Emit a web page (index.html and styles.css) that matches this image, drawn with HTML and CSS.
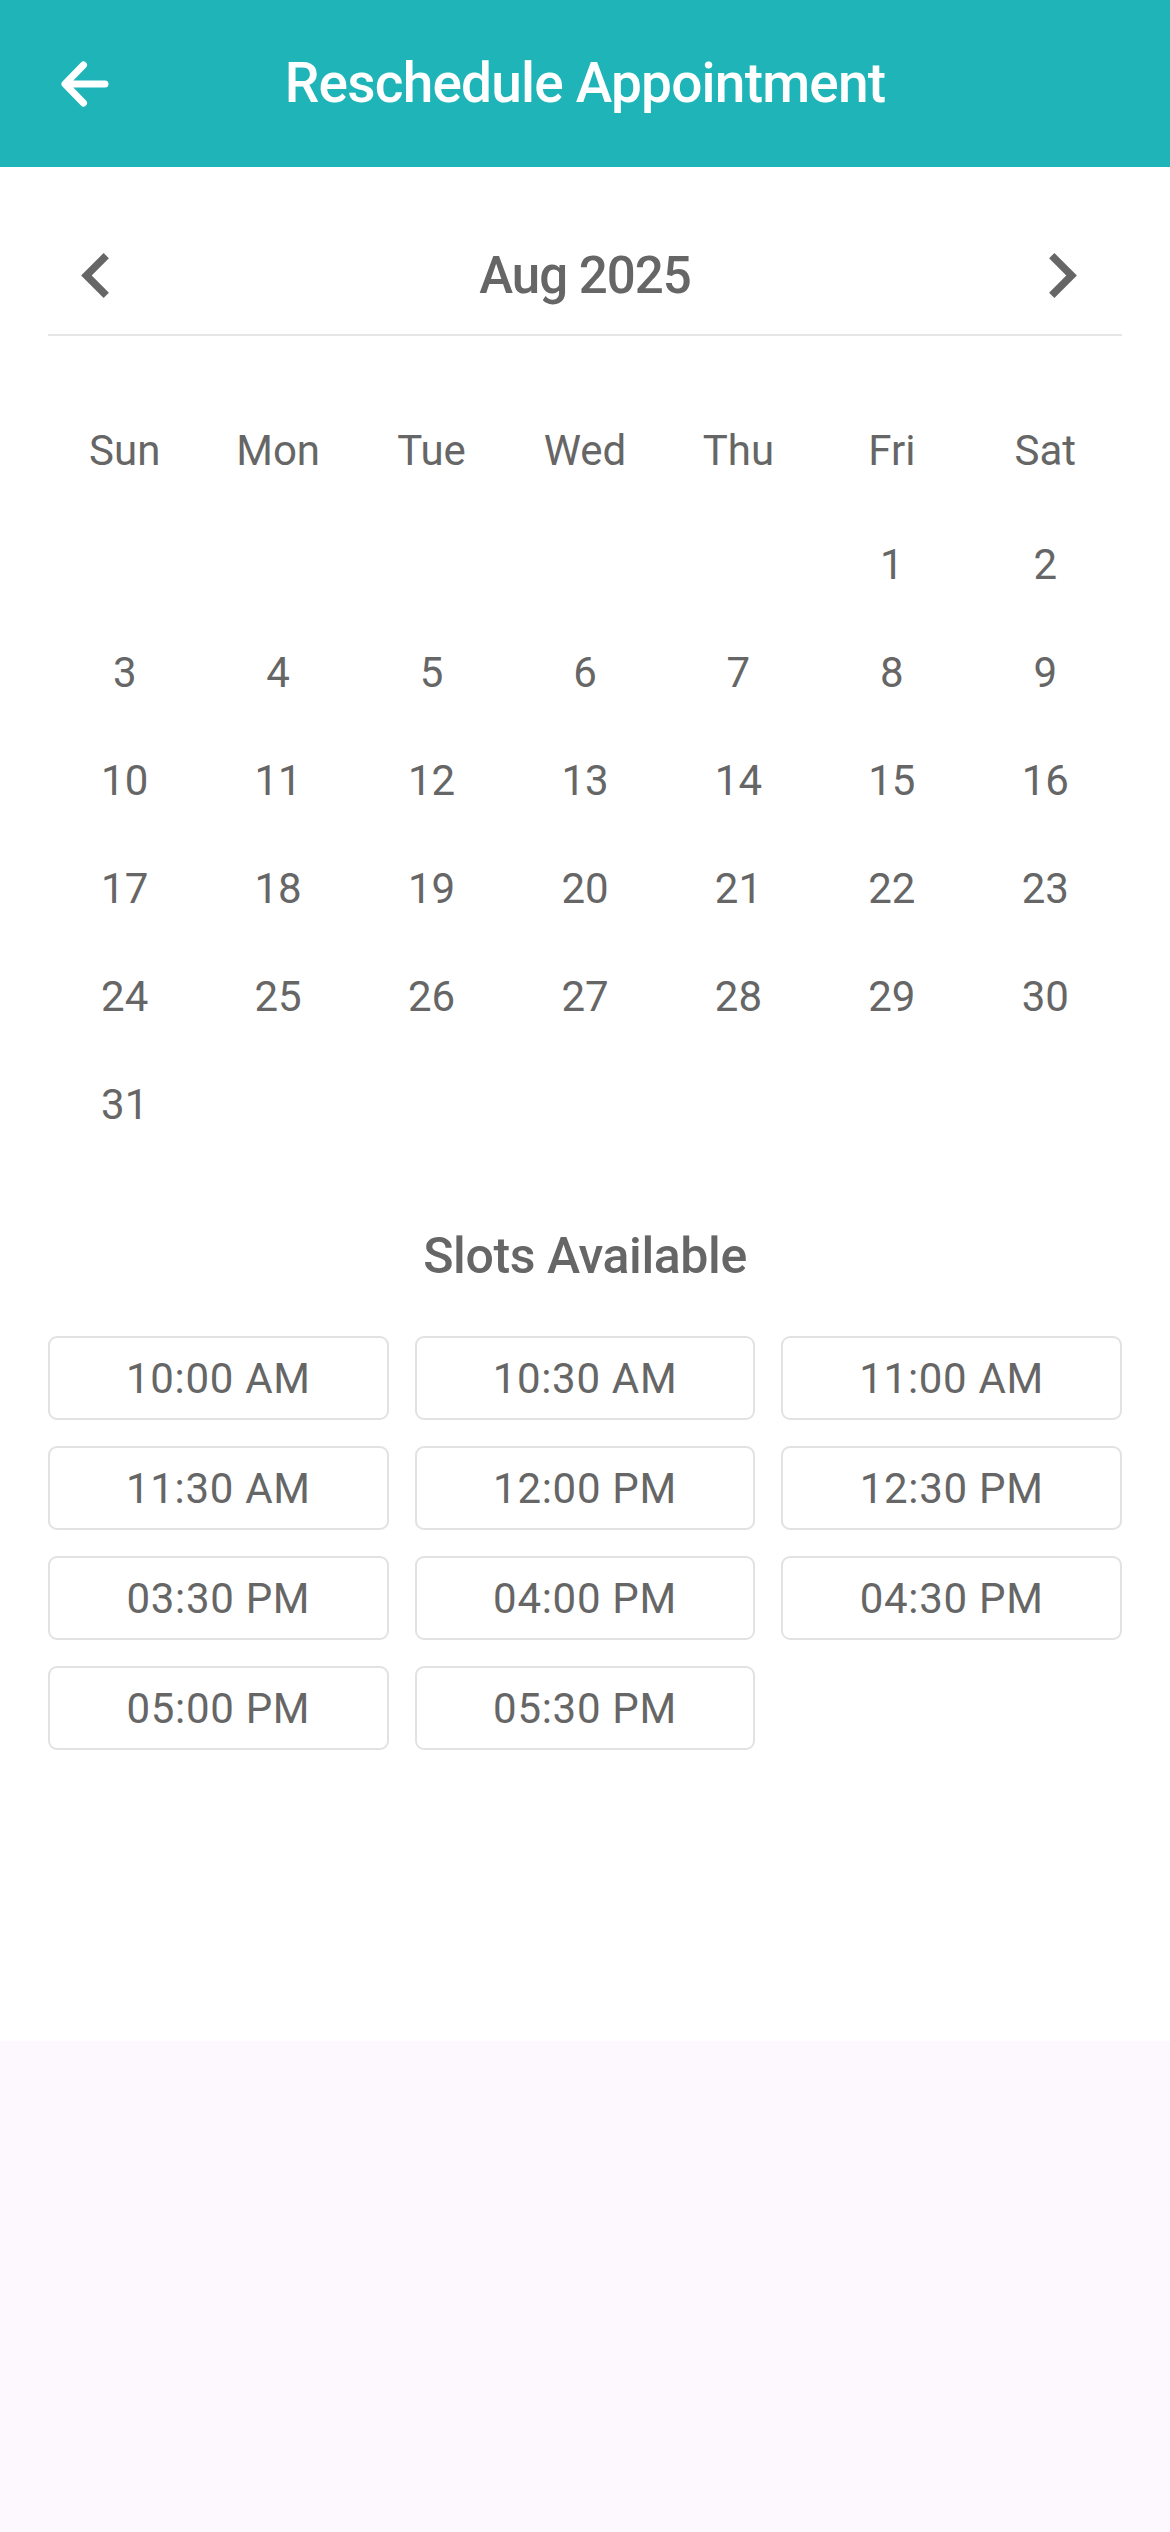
FILE: index.html
```html
<!DOCTYPE html>
<html lang="en">
<head>
<meta charset="utf-8">
<title>Reschedule Appointment</title>
<link rel="stylesheet" href="styles.css">
</head>
<body>
<div class="screen">
  <header class="appbar">
    <div class="appbar-lead">
      <svg class="back-icon" width="48" height="48" viewBox="0 0 48 48" aria-hidden="true">
        <path d="M44 24 H5 M22.5 5 L4 24 L22.5 43" fill="none" stroke="#fff" stroke-width="7" stroke-linecap="round" stroke-linejoin="round"/>
      </svg>
    </div>
    <h1 class="appbar-title">Reschedule Appointment</h1>
    <div class="appbar-trail"></div>
  </header>

  <main class="content">
    <div class="month-nav">
      <svg class="chev chev-left" width="28" height="45" viewBox="8 6 7.41 12" aria-hidden="true">
        <path d="M15.41 7.41L14 6l-6 6 6 6 1.41-1.41L10.83 12z" fill="#666"/>
      </svg>
      <div class="month-label">Aug 2025</div>
      <svg class="chev chev-right" width="28" height="45" viewBox="8.59 6 7.41 12" aria-hidden="true">
        <path d="M10 6L8.59 7.41 13.17 12l-4.58 4.59L10 18l6-6z" fill="#666"/>
      </svg>
    </div>

    <div class="weekdays">
      <span>Sun</span><span>Mon</span><span>Tue</span><span>Wed</span><span>Thu</span><span>Fri</span><span>Sat</span>
    </div>

    <div class="days">
      <span></span><span></span><span></span><span></span><span></span><span>1</span><span>2</span>
      <span>3</span><span>4</span><span>5</span><span>6</span><span>7</span><span>8</span><span>9</span>
      <span>10</span><span>11</span><span>12</span><span>13</span><span>14</span><span>15</span><span>16</span>
      <span>17</span><span>18</span><span>19</span><span>20</span><span>21</span><span>22</span><span>23</span>
      <span>24</span><span>25</span><span>26</span><span>27</span><span>28</span><span>29</span><span>30</span>
      <span>31</span>
    </div>

    <h2 class="slots-title">Slots Available</h2>

    <div class="slots">
      <button class="slot">10:00 AM</button>
      <button class="slot">10:30 AM</button>
      <button class="slot">11:00 AM</button>
      <button class="slot">11:30 AM</button>
      <button class="slot">12:00 PM</button>
      <button class="slot">12:30 PM</button>
      <button class="slot">03:30 PM</button>
      <button class="slot">04:00 PM</button>
      <button class="slot">04:30 PM</button>
      <button class="slot">05:00 PM</button>
      <button class="slot">05:30 PM</button>
    </div>
  </main>
</div>
</body>
</html>
```

FILE: styles.css
```css
* {
  box-sizing: border-box;
}

html, body {
  margin: 0;
  padding: 0;
}

body {
  background: #fdf7fe;
  font-family: Roboto, "Noto Sans", "Liberation Sans", sans-serif;
  color: #666666;
  min-height: 2532px;
}

.screen {
  background: #ffffff;
  height: 2041px;
}

.appbar {
  height: 167px;
  background: #1fb5b8;
  display: grid;
  grid-template-columns: 1fr auto 1fr;
  align-items: center;
}

.appbar-lead {
  display: flex;
  align-items: center;
  padding-left: 61px;
}

.back-icon {
  display: block;
}

.appbar-title {
  margin: 0;
  color: #ffffff;
  font-size: 55px;
  font-weight: 500;
  line-height: 1;
  letter-spacing: -0.8px;
}

.content {
  padding: 0 48px;
}

.month-nav {
  margin-top: 64px;
  height: 105px;
  padding-bottom: 15px;
  border-bottom: 2px solid #e6e6e6;
  display: grid;
  grid-template-columns: 1fr auto 1fr;
  align-items: center;
}

.chev {
  display: block;
}

.chev-left {
  margin-left: 33px;
  justify-self: start;
}

.chev-right {
  margin-right: 45px;
  justify-self: end;
}

.month-label {
  font-size: 51px;
  font-weight: 500;
  letter-spacing: -1px;
  color: #666666;
}

.weekdays,
.days {
  display: grid;
  grid-template-columns: repeat(7, 1fr);
}

.weekdays {
  margin-top: 60px;
  margin-bottom: 6px;
}

.weekdays span,
.days span {
  height: 108px;
  display: flex;
  align-items: center;
  justify-content: center;
  font-size: 42px;
  color: #666666;
}

.slots-title {
  margin: 68px 0 50px;
  text-align: center;
  font-size: 50px;
  line-height: 60px;
  font-weight: 500;
  letter-spacing: -0.4px;
  color: #666666;
}

.slots {
  display: grid;
  grid-template-columns: repeat(3, 1fr);
  gap: 26px;
}

.slot {
  height: 84px;
  background: #ffffff;
  border: 2px solid #e2e2e2;
  border-radius: 9px;
  font-family: Roboto, "Noto Sans", "Liberation Sans", sans-serif;
  font-size: 42px;
  letter-spacing: 0.7px;
  color: #666666;
  padding: 0;
}
```
